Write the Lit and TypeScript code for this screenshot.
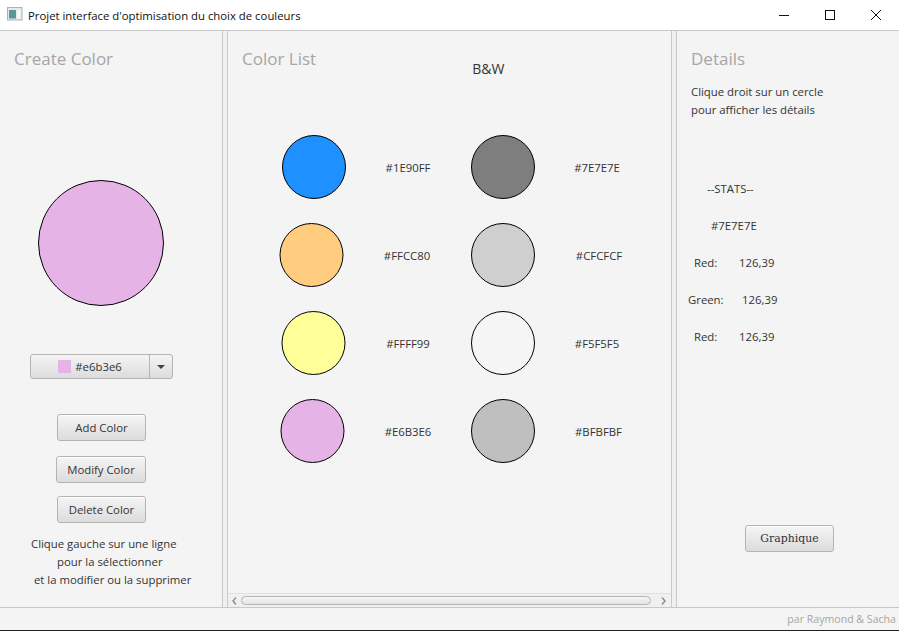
import { LitElement, html, css } from 'lit';
import { customElement } from 'lit/decorators.js';

// dx: small horizontal shift of each cell, the original layout is not aligned
const COLORS = [
  { c: '#1E90FF', dx: 1, ldx: 0, g: '#7E7E7E', gdx: 0, gldx: -1 },
  { c: '#FFCC80', dx: -1.5, ldx: -1, g: '#CFCFCF', gdx: 0, gldx: 1 },
  { c: '#FFFF99', dx: 0.5, ldx: 0, g: '#F5F5F5', gdx: 0, gldx: -1 },
  { c: '#E6B3E6', dx: -0.5, ldx: 0, g: '#BFBFBF', gdx: 0, gldx: 0.5 },
];

@customElement('app-root')
export class AppRoot extends LitElement {
  static styles = css`
    :host {
      display: flex;
      flex-direction: column;
      width: 899px;
      height: 631px;
      overflow: hidden;
      background: #f4f4f4;
      color: #333;
      font-family: 'Open Sans', 'Noto Sans', sans-serif;
      font-size: 11.35px;
    }
    .titlebar {
      height: 30px;
      flex: none;
      background: #fff;
      display: flex;
      align-items: center;
      padding-left: 7px;
      box-sizing: border-box;
      color: #111;
    }
    .titlebar .name {
      margin-left: 5px;
      flex: 1;
    }
    .winbtn {
      width: 46px;
      height: 30px;
      display: flex;
      align-items: center;
      justify-content: center;
    }
    .main {
      flex: 1;
      min-height: 0;
      display: flex;
      border-top: 1px solid #c8c8c8;
      border-bottom: 1px solid #c8c8c8;
    }
    .pane {
      box-sizing: border-box;
      display: flex;
      flex-direction: column;
      position: relative;
    }
    .left {
      width: 222px;
      align-items: flex-start;
    }
    .center {
      width: 443px;
    }
    .right {
      flex: 1;
    }
    .divider {
      width: 6px;
      flex: none;
      box-sizing: border-box;
      border-left: 1px solid #c8c8c8;
      border-right: 1px solid #c8c8c8;
      background: #f0f0f0;
    }
    h2 {
      margin: 0;
      font-size: 17px;
      font-weight: 400;
      line-height: 24px;
      color: #a6a6a6;
    }
    .left h2 {
      margin: 16px 0 0 14px;
    }
    .big {
      width: 124px;
      height: 124px;
      margin: 109px 0 0 38px;
      border: 1px solid #000;
      border-radius: 50%;
      background: #e6b3e6;
    }
    button {
      font: inherit;
      color: #333;
      box-sizing: border-box;
      border: 1px solid #b4b4b4;
      border-radius: 3px;
      background: linear-gradient(#f5f5f5, #dcdcdc);
      padding: 0;
      box-shadow: inset 0 1px 0 #fff;
    }
    .picker {
      width: 143px;
      height: 25px;
      margin: 48px 0 0 30px;
      display: flex;
      border: 1px solid #b4b4b4;
      border-radius: 3px;
      box-sizing: border-box;
      background: linear-gradient(#f5f5f5, #dcdcdc);
    }
    .picker .val {
      flex: 1;
      display: flex;
      align-items: center;
      justify-content: center;
      gap: 4px;
      border-right: 1px solid #b4b4b4;
    }
    .swatch {
      width: 13px;
      height: 13px;
      background: #e6b3e6;
    }
    .picker .arrow {
      width: 22px;
      display: flex;
      align-items: center;
      justify-content: center;
    }
    .tri {
      width: 0;
      height: 0;
      border-left: 4px solid transparent;
      border-right: 4px solid transparent;
      border-top: 4px solid #444;
    }
    .action {
      width: 89px;
      height: 27px;
    }
    .add {
      margin: 35px 0 0 57px;
    }
    .modify {
      margin: 15px 0 0 56px;
      width: 90px;
    }
    .delete {
      margin: 13px 0 0 57px;
    }
    .hint {
      margin: 12px 0 0 0;
      line-height: 18px;
    }
    .hint .l1 {
      padding-left: 31px;
    }
    .hint .l2 {
      padding-left: 57px;
    }
    .hint .l3 {
      padding-left: 34px;
    }
    .center .head {
      display: flex;
      height: 92px;
      flex: none;
    }
    .center h2 {
      margin: 16px 0 0 14px;
    }
    .bw {
      margin: 29px 0 0 156px;
      font-size: 14px;
      line-height: 18px;
    }
    .grid {
      flex: 1;
      display: grid;
      grid-template-columns: repeat(4, 95px);
      grid-auto-rows: 88px;
      align-content: start;
      justify-items: center;
      align-items: center;
      padding-left: 37.5px;
    }
    .dot {
      box-sizing: border-box;
      width: 64px;
      height: 64px;
      border: 1px solid #000;
      border-radius: 50%;
    }
    .scroll {
      height: 14px;
      flex: none;
      display: flex;
      align-items: center;
      background: #f0f0f0;
      border-top: 1px solid #e0e0e0;
      box-sizing: border-box;
    }
    .scroll .thumb {
      flex: 1;
      height: 9px;
      border: 1px solid #b4b4b4;
      border-radius: 5px;
      box-sizing: border-box;
      background: linear-gradient(#f5f5f5, #e4e4e4);
    }
    .scroll svg {
      flex: none;
    }
    .right h2 {
      margin: 16px 0 0 14px;
    }
    .right .info {
      margin: 12px 0 0 14px;
      line-height: 18px;
    }
    .stats {
      margin: 51px 0 0 0;
      display: grid;
      grid-auto-rows: 37px;
      align-items: center;
    }
    .stat {
      display: flex;
    }
    .stat.title {
      padding-left: 30px;
    }
    .stat.hex {
      padding-left: 34px;
    }
    .stat.red {
      padding-left: 17px;
    }
    .stat.red span {
      width: 45px;
    }
    .stat.green {
      padding-left: 11px;
    }
    .stat.green span {
      width: 54px;
    }
    .graph {
      position: absolute;
      left: 68px;
      top: 494px;
      width: 89px;
      height: 27px;
      font-family: 'DejaVu Serif', serif;
      font-size: 10.9px;
    }
    .footer {
      height: 22px;
      flex: none;
      display: flex;
      align-items: center;
      justify-content: flex-end;
      padding-right: 3px;
      color: #a6a6a6;
      font-size: 10.6px;
    }
    .edge {
      height: 1px;
      flex: none;
      background: #222;
    }
  `;

  render() {
    return html`
      <div class="titlebar">
        <svg width="16" height="16" viewBox="0 0 16 16">
          <rect x="0.5" y="0.5" width="14.5" height="12.5" fill="#e4e9eb" stroke="#a9b4b6"/>
          <rect x="2" y="3" width="7" height="8.5" fill="#5f9497"/>
          <rect x="10" y="3" width="3.5" height="8.5" fill="#f4f7f8"/>
        </svg>
        <span class="name">Projet interface d'optimisation du choix de couleurs</span>
        <span class="winbtn"><svg width="10" height="10"><path d="M0 5.5h10" stroke="#111"/></svg></span>
        <span class="winbtn"><svg width="10" height="10"><rect x="0.5" y="0.5" width="9" height="9" fill="none" stroke="#111"/></svg></span>
        <span class="winbtn"><svg width="10" height="10"><path d="M0 0l10 10M10 0L0 10" stroke="#111"/></svg></span>
      </div>
      <div class="main">
        <section class="pane left">
          <h2>Create Color</h2>
          <div class="big"></div>
          <div class="picker">
            <div class="val"><span class="swatch"></span>#e6b3e6</div>
            <div class="arrow"><span class="tri"></span></div>
          </div>
          <button class="action add">Add Color</button>
          <button class="action modify">Modify Color</button>
          <button class="action delete">Delete Color</button>
          <div class="hint">
            <div class="l1">Clique gauche sur une ligne</div>
            <div class="l2">pour la sélectionner</div>
            <div class="l3">et la modifier ou la supprimer</div>
          </div>
        </section>
        <div class="divider"></div>
        <section class="pane center">
          <div class="head">
            <h2>Color List</h2>
            <div class="bw">B&amp;W</div>
          </div>
          <div class="grid">
            ${COLORS.map(
              (r) => html`
                <div class="dot" style="background:${r.c};translate:${r.dx}px 0"></div>
                <div style="translate:${r.ldx}px 0">${r.c}</div>
                <div class="dot" style="background:${r.g};translate:${r.gdx}px 0"></div>
                <div style="translate:${r.gldx}px 0">${r.g}</div>
              `,
            )}
          </div>
          <div class="scroll">
            <svg width="13" height="10" viewBox="0 0 13 10"><path d="M8 1.5L5 5l3 3.5" fill="none" stroke="#8c8c8c" stroke-width="1.4"/></svg>
            <div class="thumb"></div>
            <svg width="20" height="10" viewBox="0 0 20 10"><path d="M11 1.5L14 5l-3 3.5" fill="none" stroke="#8c8c8c" stroke-width="1.4"/></svg>
          </div>
        </section>
        <div class="divider"></div>
        <section class="pane right">
          <h2>Details</h2>
          <div class="info">Clique droit sur un cercle<br />pour afficher les détails</div>
          <div class="stats">
            <div class="stat title">--STATS--</div>
            <div class="stat hex">#7E7E7E</div>
            <div class="stat red"><span>Red:</span>126,39</div>
            <div class="stat green"><span>Green:</span>126,39</div>
            <div class="stat red"><span>Red:</span>126,39</div>
          </div>
          <button class="graph">Graphique</button>
        </section>
      </div>
      <div class="footer">par Raymond &amp; Sacha</div>
      <div class="edge"></div>
    `;
  }
}
